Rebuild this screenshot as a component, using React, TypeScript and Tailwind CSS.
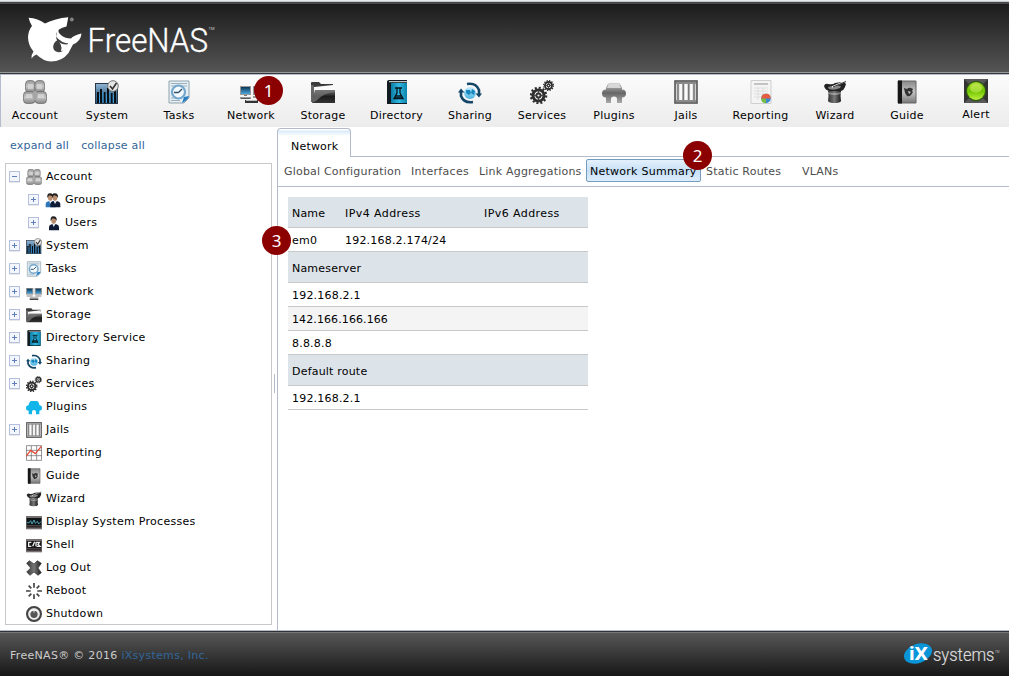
import React from "react";

type IconName =
  | "account" | "system" | "tasks" | "network" | "storage" | "directory" | "sharing" | "services"
  | "plugins" | "pluginsBlue" | "jails" | "reporting" | "chart" | "wizard" | "guide" | "alert"
  | "groups" | "users" | "processes" | "shell" | "logout" | "reboot" | "shutdown" | "networkSmall";

const Person = ({ x, tie }: { x: number; tie: string }) => (
  <g transform={`translate(${x} 0)`}>
    <path d="M1 23v-5q0-3 4-4l3-1 4 1q4 1 4 4v5z" fill={tie} />
    <path d="M6 13l2 5 3-5z" fill="#e8edf5" />
    <ellipse cx="8" cy="8.500" rx="3.500" ry="4.500" fill="#b98d6d" />
    <path d="M3.500 9q-1-7 4-7 6 0 5 7l-2-3-4-1z" fill="#222" />
  </g>
);

const Gear = ({ cx, cy, r }: { cx: number; cy: number; r: number }) => (
  <g>
    <circle cx={cx} cy={cy} r={r * 0.9} fill="none" stroke="#2c2c2c" strokeWidth={r * 0.24} strokeDasharray={`${r * 0.24} ${r * 0.231}`} />
    <circle cx={cx} cy={cy} r={r * 0.65} fill="none" stroke="#2c2c2c" strokeWidth={r * 0.34} />
    <circle cx={cx} cy={cy} r={r * 0.24} fill="none" stroke="#333" strokeWidth={r * 0.22} />
    <path
      d={`M${cx} ${cy - r * 0.6}V${cy - r * 0.25}M${cx} ${cy + r * 0.25}V${cy + r * 0.6}M${cx - r * 0.6} ${cy}H${cx - r * 0.25}M${cx + r * 0.25} ${cy}H${cx + r * 0.6}`}
      stroke="#444" strokeWidth={r * 0.18}
    />
  </g>
);

const plugPath = "M4 9.500V8l1.500-3.500Q6.500 3 8 3h8q1.500 0 2.500 1.500L20 8v1.500q4 0 4 4t-4 4V23h-5v-4q0-2.500-3-2.500T9 19v4H4v-5.500q-4 0-4-4t4-4z";

const art: Record<IconName, React.ReactNode> = {
  account: (
    <g>
      <rect x="2.500" y=".5" width="9.500" height="12" rx="3.500" fill="url(#silver)" stroke="#666" strokeWidth=".7" />
      <rect x="12" y=".5" width="9.500" height="12" rx="3.500" fill="url(#silver)" stroke="#666" strokeWidth=".7" />
      <rect x=".5" y="11.500" width="11.500" height="12" rx="3.500" fill="url(#silver)" stroke="#666" strokeWidth=".7" />
      <rect x="12" y="11.500" width="11.500" height="12" rx="3.500" fill="url(#silver)" stroke="#666" strokeWidth=".7" />
      <path d="M5 4h5v5H5zM14 4h5v5h-5z" fill="#d6d6d6" opacity=".8" />
      <path d="M3 14h6v4H3zM15 14h6v4h-6z" fill="#ddd" opacity=".7" />
      <path d="M10 12q2-3 4 0v7q-2 3-4 0z" fill="#a5a5a5" />
    </g>
  ),
  system: (
    <g>
      <rect x=".5" y="3.500" width="22" height="20" fill="url(#steel)" stroke="#293847" />
      <path d="M2 12h2v11H2zM5 9h2v14H5zM8.500 12h2v11h-2zM12 8h2v15h-2zM15.500 13h2v10h-2zM19 11h2v12h-2z" fill="#0a0f14" />
      <path d="M4 14h1v9H4zM7.500 12h1v11h-1zM11 14h1v9h-1zM14.500 12h1v11h-1zM18 15h1v8h-1z" fill="#3d9be0" />
      <circle cx="18" cy="6" r="5.300" fill="#e6e6e6" stroke="#777" />
      <path d="M15 6l2.500 3 4-6" fill="none" stroke="#333" strokeWidth="1.600" />
    </g>
  ),
  tasks: (
    <g>
      <path d="M2 1h20v17l-5 5H2z" fill="#e4eef4" stroke="#8fa3ad" />
      <path d="M4 3.500h16M4 6h16M4 18h9M4 20.500h9" stroke="#9fb2bb" />
      <circle cx="11.500" cy="12" r="6.500" fill="#f3faff" stroke="#74a7cb" strokeWidth="2.200" />
      <path d="M11.500 12.500L15 9M11.500 12.500H7" fill="none" stroke="#334e66" strokeWidth="1.400" />
      <path d="M15 23l2-6 5-1q-1 4-7 7z" fill="#277fc2" />
    </g>
  ),
  network: (
    <g>
      <path d="M1 6h11v9H1z" fill="#999" /><path d="M2 7h9v7H2z" fill="url(#screen)" />
      <path d="M14 6h10v9H14z" fill="#999" /><path d="M15 7h8v7h-8z" fill="url(#screen)" />
      <path d="M5 15h3v1H5z" fill="#777" />
      <path d="M1 17h11v2H1zM14 16h8v2h-8z" fill="#999" /><path d="M2 18h9v1H2z" fill="#555" />
      <path d="M6 20h13v3H6z" fill="#333" /><path d="M7 20h11v1H7z" fill="#bbb" />
    </g>
  ),
  networkSmall: (
    <g>
      <path d="M0 6h11v10H0z" fill="#999" /><path d="M1.500 7h8v7.500h-8z" fill="url(#screen)" />
      <path d="M13 6h11v10H13z" fill="#999" /><path d="M14.500 7h8v7.500h-8z" fill="url(#screen)" />
      <path d="M1 17h9v2H1zM14 17h9v2h-9z" fill="#aaa" />
      <path d="M7 19h10l2 2v3H5v-3z" fill="#bbb" /><path d="M6 22h12v2H6z" fill="#444" />
    </g>
  ),
  storage: (
    <g>
      <path d="M0 3q0-1 1-1h7l2 2h12v4H0z" fill="#3b3b3b" />
      <path d="M3 7l19-2v8H3z" fill="#fafafa" />
      <path d="M0 5h2l1 1v16H0z" fill="#666" />
      <path d="M4 10h20v13H1z" fill="url(#dark)" />
      <path d="M4 10h20v2q-12 1-19 9L1 23z" fill="#777" opacity=".75" />
    </g>
  ),
  directory: (
    <g>
      <path d="M2 2q0-2 2-2h18v24H2z" fill="#101a20" />
      <path d="M4 1.200h18v1H4z" fill="#eee" />
      <path d="M6 3h16v20H6z" fill="url(#cyan)" />
      <path d="M10 8h7M12 8v5l-3 5.500h9L15 13V8" fill="none" stroke="#06151c" strokeWidth="1.300" />
      <path d="M11 15h5l1.500 3h-8z" fill="#06151c" opacity=".75" />
    </g>
  ),
  sharing: (
    <g>
      <circle cx="12" cy="13" r="6" fill="url(#globe)" />
      <path d="M8 10l4 0 1 3-2 2-3-2zM14 9l3 2-1 4-3-2z" fill="#1686bd" />
      <path d="M9 4Q18 2.500 21 10v4M15 22Q6 23.500 3 16v-4" fill="none" stroke="#134567" strokeWidth="2.600" />
      <path d="M17.500 13.500H24L21 17.500zM0 12.500L3 8.500l3.500 4z" fill="#134567" />
    </g>
  ),
  services: <g><Gear cx={8.5} cy={15.5} r={8.6} /><Gear cx={18.5} cy={5.5} r={5.4} /></g>,
  plugins: (
    <g>
      <path d={plugPath} fill="url(#plug)" />
      <path d="M5 8l1.500-3.500q1-1 2-1h7q1 0 2 1L19 8z" fill="#e3e3e3" opacity=".8" />
    </g>
  ),
  pluginsBlue: <path d={plugPath} fill="#12b5ea" />,
  jails: (
    <g>
      <rect x="1" y="1" width="22" height="22" fill="#d2d2d2" stroke="#555" strokeWidth="1.600" />
      <path d="M4 3v18M9.300 3v18M14.700 3v18M20 3v18" stroke="#777" strokeWidth="1.500" />
      <path d="M6.700 4v16M12 4v16M17.300 4v16" stroke="#fbfbfb" strokeWidth="2.400" />
      <path d="M2 3h20M2 21h20" stroke="#8a8a8a" strokeWidth="1.800" />
    </g>
  ),
  reporting: (
    <g>
      <path d="M2 .5h20v23H2z" fill="#f4f4f4" stroke="#cfcfcf" />
      <path d="M5 3h14v2H5z" fill="#c4c4c4" />
      <path d="M5 8h14M5 11h14M5 14h14M5 17h10M9 8v12M14 8v12" stroke="#dedede" />
      <circle cx="17" cy="18.500" r="4.700" fill="#3989d5" />
      <path d="M17 18.500v4.700q-5 0-4.700-5z" fill="#76bd42" />
      <path d="M12.300 18.500h9.400q0-5-4.700-4.700-4.500 0-4.700 4.700z" fill="#e65c42" />
    </g>
  ),
  chart: (
    <g>
      <path d="M.7 1h22.600v22H.7zM8 1v22M16 1v22M0 8h24M0 16h24" stroke="#777" strokeWidth="1.200" fill="#fff" />
      <path d="M0 17l7-9 7 5 9-11" stroke="#e84b37" strokeWidth="2" fill="none" />
    </g>
  ),
  wizard: (
    <g>
      <path d="M1 6q1-3 4-2 5 1 7-1l7-1q3 0 4 2l-1 3q-1 3-4 4H6q-4-1-5-5z" fill="#222" />
      <path d="M5 11h13q-1 5 0 10-1 2-6.500 2T5 21q1-5 0-10z" fill="url(#hat)" />
      <path d="M5 12q6 2 13 0v2q-6 2-13 0z" fill="#fff" opacity=".35" />
      <path d="M5 7q6-2 13-1l-1 2q-6 3-11 1z" fill="#888" />
      <path d="M9 7L23 1" stroke="#eee" strokeWidth="1.500" /><path d="M10 7L23 1.500" stroke="#333" />
    </g>
  ),
  guide: (
    <g>
      <path d="M3 1h18v22H3z" fill="url(#book)" stroke="#666" /><path d="M3 .5h4v23H3z" fill="#161616" />
      <path d="M9 8l3 1q2-2 4-1l2 1-1 2 1 1-2 3q-2 2-4 1l-2-3z" fill="#333" />
      <path d="M13 11l3 1-2 2z" fill="#ccc" />
    </g>
  ),
  alert: (
    <g>
      <path d="M0 0h24v24H0z" fill="#333" />
      <path d="M0 0h24L12 12zM0 24h24L12 12z" fill="#585858" />
      <circle cx="12" cy="12" r="10.300" fill="#315716" /><circle cx="12" cy="12" r="9" fill="url(#green)" />
      <ellipse cx="12" cy="9" rx="6" ry="4.500" fill="#d8f36c" opacity=".5" />
    </g>
  ),
  groups: <g><Person x={0} tie="#2d77b8" /><Person x={7} tie="#101c35" /></g>,
  users: <Person x={5} tie="#101c35" />,
  processes: (
    <g>
      <path d="M0 3h24v20H0z" fill="#777071" /><path d="M1 6h22v11H1z" fill="#101416" />
      <path d="M1 13h4l2-3 2 5 3-6 2 5 3-3 2 4 4-4" fill="none" stroke="#4fa9bc" strokeWidth="1.400" /><path d="M1 19h22" stroke="#302a2c" strokeWidth="3" />
    </g>
  ),
  shell: (
    <g>
      <path d="M0 3h24v20H0z" fill="#777071" /><path d="M1 6h22v11H1z" fill="#151515" />
      <path d="M8 8H4v6h4M10 14l3-7M15 8v6M15 8l5 0-2 3 3 3h-5" fill="none" stroke="#eee" strokeWidth="2" /><path d="M1 19h22" stroke="#302a2c" strokeWidth="3" />
    </g>
  ),
  logout: <path d="M1 5l4-4 7 5 5-5 6 4-5 7 5 7-5 4-6-5-6 5-5-5 6-6z" fill="url(#hat)" stroke="#333" />,
  reboot: (
    <g stroke="#444" strokeWidth="2.500">
      <path d="M12 0v7M12 17v7M0 12h7M17 12h7" /><path d="M4 4l4 4M16 16l4 4M4 20l4-4M16 8l4-4" />
    </g>
  ),
  shutdown: (
    <g>
      <circle cx="12" cy="12" r="10.500" fill="#999" stroke="#444" strokeWidth="3" />
      <circle cx="12" cy="12" r="7.500" fill="#fff" stroke="#eee" strokeWidth="2" />
      <circle cx="12" cy="12.500" r="5.500" fill="#555" /><path d="M12 5v5" stroke="#eee" strokeWidth="1.500" />
    </g>
  ),
};

const Icon = ({ name, size = 16 }: { name: IconName; size?: number }) => (
  <svg className="block shrink-0" width={size} height={size} viewBox="0 0 24 24">{art[name]}</svg>
);

const Gradient = ({ id, stops, flat }: { id: string; stops: string[]; flat?: boolean }) => (
  <linearGradient id={id} x1="0" y1="0" x2={flat ? 1 : 0} y2={flat ? 0 : 1}>
    {stops.map((c, i) => <stop key={i} offset={i / (stops.length - 1)} stopColor={c} />)}
  </linearGradient>
);

const Defs = () => (
  <svg className="absolute" width="0" height="0">
    <defs>
      <Gradient id="silver" stops={["#999", "#c4c4c4", "#858585"]} />
      <Gradient id="steel" stops={["#93b7d5", "#497699", "#285b85"]} />
      <Gradient id="screen" stops={["#0b3555", "#4ba8df"]} />
      <Gradient id="dark" stops={["#777", "#1d1d1d", "#333"]} />
      <Gradient id="cyan" stops={["#0b7da4", "#32b7e3", "#0c84aa"]} flat />
      <Gradient id="globe" stops={["#c4eaff", "#48b4df"]} />
      <Gradient id="plug" stops={["#c5c5c5", "#666", "#aaa"]} />
      <Gradient id="hat" stops={["#333", "#777", "#1b1b1b"]} flat />
      <Gradient id="book" stops={["#888", "#c3c3c3", "#777"]} />
      <Gradient id="green" stops={["#a7d92d", "#6fc400", "#bdef3e"]} />
    </defs>
  </svg>
);

const toolbar: { name: string; icon: IconName; width: string }[] = [
  { name: "Account", icon: "account", width: "w-16" },
  { name: "System", icon: "system", width: "w-16" },
  { name: "Tasks", icon: "tasks", width: "w-16" },
  { name: "Network", icon: "network", width: "w-16" },
  { name: "Storage", icon: "storage", width: "w-16" },
  { name: "Directory", icon: "directory", width: "w-[67px]" },
  { name: "Sharing", icon: "sharing", width: "w-16" },
  { name: "Services", icon: "services", width: "w-16" },
  { name: "Plugins", icon: "plugins", width: "w-16" },
  { name: "Jails", icon: "jails", width: "w-16" },
  { name: "Reporting", icon: "reporting", width: "w-[69px]" },
  { name: "Wizard", icon: "wizard", width: "w-16" },
  { name: "Guide", icon: "guide", width: "w-16" },
  { name: "Alert", icon: "alert", width: "w-[56px] ml-px -mt-px" },
];

const tree: { name: string; icon: IconName; toggle?: "+" | "-"; child?: boolean }[] = [
  { name: "Account", icon: "account", toggle: "-" },
  { name: "Groups", icon: "groups", toggle: "+", child: true },
  { name: "Users", icon: "users", toggle: "+", child: true },
  { name: "System", icon: "system", toggle: "+" },
  { name: "Tasks", icon: "tasks", toggle: "+" },
  { name: "Network", icon: "networkSmall", toggle: "+" },
  { name: "Storage", icon: "storage", toggle: "+" },
  { name: "Directory Service", icon: "directory", toggle: "+" },
  { name: "Sharing", icon: "sharing", toggle: "+" },
  { name: "Services", icon: "services", toggle: "+" },
  { name: "Plugins", icon: "pluginsBlue" },
  { name: "Jails", icon: "jails", toggle: "+" },
  { name: "Reporting", icon: "chart" },
  { name: "Guide", icon: "guide" },
  { name: "Wizard", icon: "wizard" },
  { name: "Display System Processes", icon: "processes" },
  { name: "Shell", icon: "shell" },
  { name: "Log Out", icon: "logout" },
  { name: "Reboot", icon: "reboot" },
  { name: "Shutdown", icon: "shutdown" },
];

const Toggle = ({ kind }: { kind?: "+" | "-" }) => (
  <span className="mt-[2px] flex w-[11px] shrink-0">
    {kind && (
      <svg width="11" height="12" viewBox="0 0 11 12">
        <rect x=".5" y=".5" width="10" height="10" fill="#f3f6fc" stroke="#b5c0de" />
        <path d="M0 11.500h11" stroke="#e9e9e9" />
        <path d={kind === "+" ? "M3 5.500h5M5.500 3v5" : "M3 5.500h5"} stroke="#5f7fb8" />
      </svg>
    )}
  </span>
);

const Badge = ({ n, place }: { n: number; place: string }) => (
  <div className={`absolute z-10 flex size-[29px] items-center justify-center rounded-full bg-[#8b0000] pb-px font-['Noto_Sans','Liberation_Sans',sans-serif] text-[17px] leading-none tracking-normal text-white ${place}`}>{n}</div>
);

const HeadRow = ({ children }: { children: React.ReactNode }) => (
  <div className="flex h-[31px] items-center border-b border-[#c8c8c8] bg-[#dce3e9] px-1 pt-[3px]">{children}</div>
);
const Row = ({ children, shade }: { children: React.ReactNode; shade?: boolean }) => (
  <div className={`flex h-6 items-center border-b border-[#c8c8c8] px-1 pt-[3px] ${shade ? "bg-[#f4f4f4]" : "bg-white"}`}>{children}</div>
);

export default function App() {
  return (
    <div className="relative flex h-[676px] w-[1009px] flex-col overflow-hidden bg-white font-['DejaVu_Sans',Verdana,sans-serif] text-[11px] leading-[14px] tracking-[0.2px] text-black">
      <Defs />
      <header className="flex h-[74px] shrink-0 flex-col border-t border-[#e8edf0]">
        <div className="h-px bg-[#c5c8ca]" />
        <div className="h-[70px] border-t-2 border-[#484848] bg-linear-to-b from-[#1d1d1d] to-[#555]">
          <svg className="block" width="230" height="67" viewBox="0 4 230 67">
            <path
              d="M28.600 17.800Q38 18.500 45 23.500 55 18.500 68.300 17.300L66.500 26.500Q62 27.500 59 29.500 57 32 61.500 35.500 65 38.500 71 38.500 73.500 35.500 81.500 33.500 81 41 73 44.500 71 48 68.500 53 62 61.500 51 61.500 43 61 36.500 54.500 33.500 55.500 31.500 58.500 31 55 33.500 51.500 28 45 28 37 28.500 30 32 26 29.500 22 28.600 17.800z"
              fill="#fff"
            />
            <path d="M57.500 31.500q-2 2-1.500 5 2 3 6.500 5.500 3 1.500 5.500 1-2 6-6 8.500-4 1.500-7-.5-3-3-1-7.500 1.500-2.500 3-3-2-4 .5-9z" fill="#404040" />
            <path d="M57 40q4 5 11 4.500l-1.500 3q-2 4-5.500 3.500 2-6-4-11z" fill="#fff" />
            <circle cx="71.800" cy="19.500" r="1.500" fill="#777" stroke="#aaa" strokeWidth=".7" />
            <text x="87.500" y="52" textLength="120.500" lengthAdjust="spacingAndGlyphs" fill="#fff" stroke="#fff" strokeWidth=".35" className="font-['Roboto'] text-[34px] font-light tracking-normal">FreeNAS</text>
            <text x="208.500" y="30" fill="#ccc" className="font-['Roboto'] text-[4px] tracking-normal">TM</text>
          </svg>
        </div>
        <div className="h-px bg-[#999]" />
        <div className="h-px bg-[#34373c]" />
      </header>

      <nav className="flex h-[53px] shrink-0 gap-2 border-t border-l border-[#b5bccd] bg-linear-to-b from-[#fbfbfb] to-[#ececec] pt-[5px] pl-[2px]">
        {toolbar.map((t) => (
          <div key={t.name} className={`flex shrink-0 flex-col items-center ${t.width}`}>
            <Icon name={t.icon} size={24} />
            <span className="mt-[5px] tracking-[0.28px]">{t.name}</span>
          </div>
        ))}
      </nav>

      <div className="flex h-[503px] shrink-0">
        <aside className="flex w-[272px] shrink-0 flex-col pl-[5px]">
          <div className="flex h-9 items-center gap-3 pt-[2px] pl-[5px] text-[#336699]"><span>expand all</span><span>collapse all</span></div>
          <div className="h-[462px] border border-[#c8c8c8]">
            {tree.map((t) => (
              <div key={t.name} className={`flex h-[23px] items-center tracking-[0.28px] ${t.child ? "pl-[22px]" : "pl-[3px]"}`}>
                <Toggle kind={t.toggle} />
                <span className="mt-[3px] ml-[6px]"><Icon name={t.icon} /></span>
                <span className="mt-[2px] ml-1">{t.name}</span>
              </div>
            ))}
          </div>
        </aside>
        <div className="flex w-[5px] items-center justify-center pt-[10px]"><div className="h-[19px] w-px bg-[#b5bcc7]" /></div>

        <main className="flex min-w-0 grow flex-col pt-px">
          <div className="flex h-[29px]">
            <div className="w-[74px] rounded-t-sm border border-b-0 border-[#b3bacb] bg-[linear-gradient(#ffffff_1px,#d9eafa_2px,#ffffff_7px)] pt-[11px] pl-[13px]">Network</div>
            <div className="grow border-b border-[#b3bacb]" />
          </div>
          <div className="flex grow flex-col border-l border-[#b3bacb]">
            <div className="flex h-[30px] items-center border-b border-[#b3bacb] pl-[6px] whitespace-nowrap text-[#4d4d4d]">
              <span className="w-[127px]">Global Configuration</span>
              <span className="w-[68px] tracking-[0.3px]">Interfaces</span>
              <span className="w-[107px]">Link Aggregations</span>
              <span className="mb-[3px] flex h-[23px] w-[115px] items-center rounded-xs border border-[#759dc0] bg-linear-to-b from-[#e4f1fc] via-[#c7e0f7] to-[#dcecfb] pt-[3px] pl-[3px] tracking-[0.26px] text-black">Network Summary</span>
              <span className="ml-[5px] w-[96px]">Static Routes</span>
              <span>VLANs</span>
            </div>
            <section className="mt-[10px] ml-[10px] w-[300px]">
              <HeadRow><span className="w-[53px]">Name</span><span className="w-[139px] tracking-[0.42px]">IPv4 Address</span><span className="tracking-[0.42px]">IPv6 Address</span></HeadRow>
              <Row><span className="w-[53px]">em0</span><span>192.168.2.174/24</span></Row>
              <HeadRow>Nameserver</HeadRow>
              <Row>192.168.2.1</Row>
              <Row shade><span className="tracking-[0.1px]">142.166.166.166</span></Row>
              <Row>8.8.8.8</Row>
              <HeadRow>Default route</HeadRow>
              <Row>192.168.2.1</Row>
            </section>
          </div>
        </main>
      </div>

      <footer className="flex grow items-center justify-between border-t border-[#b3bacb] bg-[linear-gradient(#333_1px,#777_1px,#777_2px,#575757_2px,#171717_100%)] pt-[4px] pr-[9px] pl-[10px] text-[#ccc]">
        <p className="tracking-[0.3px]">FreeNAS® © 2016 <span className="text-[#336699]">iXsystems, Inc.</span></p>
        <svg className="overflow-visible" width="98" height="32" viewBox="0 -3 98 32">
          <ellipse cx="16" cy="10.500" rx="14.500" ry="9.500" transform="rotate(-20 16 10.500)" fill="#0995d8" />
          <text x="7" y="17" textLength="19" lengthAdjust="spacingAndGlyphs" fill="#fff" className="font-['Roboto'] text-[19px] font-bold tracking-normal">iX</text>
          <text x="31" y="18" textLength="61.500" lengthAdjust="spacingAndGlyphs" fill="#ddd" stroke="#ddd" strokeWidth=".2" className="font-['Roboto'] text-[18px] font-light tracking-normal">systems</text>
          <text x="93" y="10" fill="#bbb" className="font-['Roboto'] text-[3px] tracking-normal">TM</text>
        </svg>
      </footer>

      <Badge n={1} place="left-[254px] top-[76px]" />
      <Badge n={2} place="left-[683px] top-[141px]" />
      <Badge n={3} place="left-[262px] top-[226px]" />
    </div>
  );
}
